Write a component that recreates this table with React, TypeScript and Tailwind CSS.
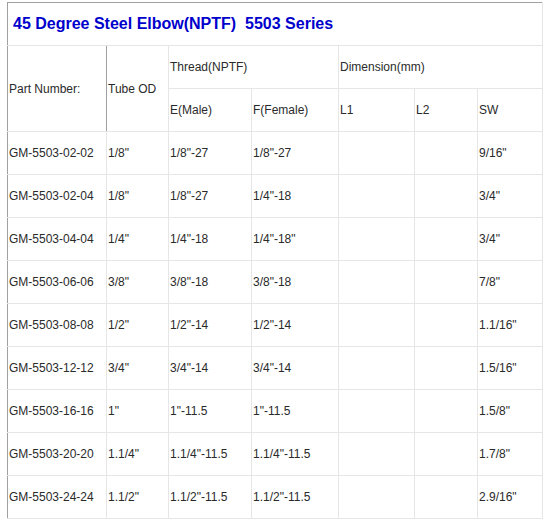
export default function App() {
  const rows = [
    ["GM-5503-02-02", '1/8"', '1/8"-27', '1/8"-27', "", "", '9/16"'],
    ["GM-5503-02-04", '1/8"', '1/8"-27', '1/4"-18', "", "", '3/4"'],
    ["GM-5503-04-04", '1/4"', '1/4"-18', '1/4"-18"', "", "", '3/4"'],
    ["GM-5503-06-06", '3/8"', '3/8"-18', '3/8"-18', "", "", '7/8"'],
    ["GM-5503-08-08", '1/2"', '1/2"-14', '1/2"-14', "", "", '1.1/16"'],
    ["GM-5503-12-12", '3/4"', '3/4"-14', '3/4"-14', "", "", '1.5/16"'],
    ["GM-5503-16-16", '1"', '1"-11.5', '1"-11.5', "", "", '1.5/8"'],
    ["GM-5503-20-20", '1.1/4"', '1.1/4"-11.5', '1.1/4"-11.5', "", "", '1.7/8"'],
    ["GM-5503-24-24", '1.1/2"', '1.1/2"-11.5', '1.1/2"-11.5', "", "", '2.9/16"'],
  ];

  const cell = "border border-[#e6e6e6] p-0 pl-px align-middle text-left font-normal";

  return (
    <div className="min-h-screen bg-white pt-[2px] pl-[7px] font-['Liberation_Sans',Arial,sans-serif] text-[12px] text-[#2a2a2a]">
      <table className="table-fixed border-collapse w-[535px] border-l border-t border-l-[#a0a0a0] border-t-[#a0a0a0]">
        <colgroup>
          <col className="w-[99px]" />
          <col className="w-[62px]" />
          <col className="w-[83px]" />
          <col className="w-[87px]" />
          <col className="w-[76px]" />
          <col className="w-[63px]" />
          <col className="w-[65px]" />
        </colgroup>
        <tbody>
          <tr className="h-[43px]">
            <td
              colSpan={7}
              className="border border-[#e6e6e6] border-t-[#a0a0a0] border-l-[#a0a0a0] pl-[5px] align-middle text-[16px] font-bold text-[#0000cc]"
            >
              45 Degree Steel Elbow(NPTF)&nbsp; 5503 Series
            </td>
          </tr>
          <tr className="h-[43px]">
            <th rowSpan={2} className={`${cell} border-l-[#a0a0a0] border-r-[#a0a0a0]`}>
              Part Number:
            </th>
            <th rowSpan={2} className={`${cell} border-l-[#a0a0a0]`}>
              Tube OD
            </th>
            <th colSpan={2} className={cell}>
              Thread(NPTF)
            </th>
            <th colSpan={3} className={`${cell} border-t-[#a0a0a0]`}>
              Dimension(mm)
            </th>
          </tr>
          <tr className="h-[43px]">
            <th className={cell}>E(Male)</th>
            <th className={cell}>F(Female)</th>
            <th className={cell}>L1</th>
            <th className={cell}>L2</th>
            <th className={cell}>SW</th>
          </tr>
          {rows.map((r) => (
            <tr key={r[0]} className="h-[43px]">
              {r.map((v, i) => (
                <td
                  key={i}
                  className={i === 0 ? `${cell} border-l-[#a0a0a0]` : cell}
                >
                  {v}
                </td>
              ))}
            </tr>
          ))}
        </tbody>
      </table>
    </div>
  );
}
